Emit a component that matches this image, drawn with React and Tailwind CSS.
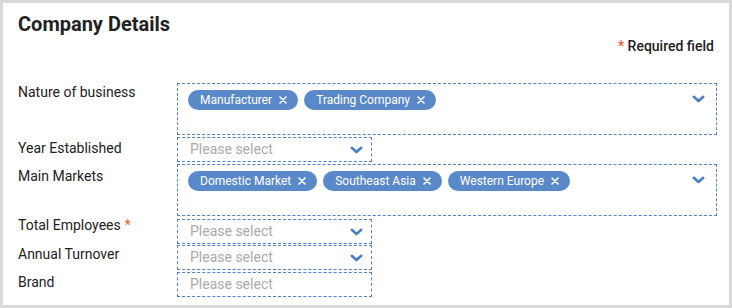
import React from "react";

const Chevron = () => (
  <svg width="13" height="8" viewBox="0 0 13 8" className="shrink-0">
    <path d="M1.8 1.8 L6.5 6 L11.2 1.8" fill="none" stroke="#4a7ec6" strokeWidth="2.6" strokeLinecap="round" strokeLinejoin="round" />
  </svg>
);

const Cross = () => (
  <svg width="8" height="8" viewBox="0 0 8 8" className="shrink-0">
    <path d="M1 1 L7 7 M7 1 L1 7" stroke="#fff" strokeWidth="1.6" strokeLinecap="round" />
  </svg>
);

const Tag = ({ label }) => (
  <span className="flex h-[20px] items-center gap-[7px] rounded-full bg-[#5a89c9] pl-[12px] pr-[11px] text-[12px] text-white">
    {label}
    <Cross />
  </span>
);

const MultiSelect = ({ tags }) => (
  <div className="flex h-[52px] w-[540px] items-start justify-between border border-dashed border-[#4f82c9] pl-[10px] pr-[11px] pt-[6px]">
    <div className="flex gap-[6px]">
      {tags.map((t) => (
        <Tag key={t} label={t} />
      ))}
    </div>
    <div className="pt-[5px]">
      <Chevron />
    </div>
  </div>
);

const Select = ({ arrow = true }) => (
  <div className="flex h-[25px] w-[195px] items-center justify-between border border-dashed border-[#4f82c9] pl-[12px] pr-[8px] text-[14px] text-[#aaaaaa]">
    <span>Please select</span>
    {arrow && <Chevron />}
  </div>
);

const rows = [
  { label: "Nature of business", mt: "mt-0", lt: "mt-[1px]", field: <MultiSelect tags={["Manufacturer", "Trading Company"]} /> },
  { label: "Year Established", mt: "mt-[2px]", lt: "mt-[3px]", field: <Select /> },
  { label: "Main Markets", mt: "mt-[2px]", lt: "mt-[4px]", field: <MultiSelect tags={["Domestic Market", "Southeast Asia", "Western Europe"]} /> },
  { label: "Total Employees", req: true, mt: "mt-[3px]", lt: "-mt-[2px]", field: <Select /> },
  { label: "Annual Turnover", mt: "mt-[1px]", lt: "mt-[1px]", field: <Select /> },
  { label: "Brand", mt: "mt-[2px]", lt: "mt-[2px]", field: <Select arrow={false} /> },
];

export default function App() {
  return (
    <div className="h-[308px] w-[732px] bg-[#d9d9d9] p-[3px] font-['Roboto',sans-serif] text-[#222222]">
      <div className="flex h-full flex-col bg-white pl-[15px] pr-[12px]">
        <h1 className="pt-[9px] text-[20px] font-bold leading-[24px]">Company Details</h1>
        <div className="mt-[2px] pr-[3px] text-right text-[14px] font-medium leading-[16px]">
          <span className="text-[#f0592b]">*</span> Required field
        </div>
        <div className="mt-[29px] flex flex-col">
          {rows.map((r) => (
            <div key={r.label} className={`flex items-start ${r.mt}`}>
              <div className={`w-[159px] shrink-0 text-[14px] leading-[16px] ${r.lt}`}>
                {r.label}
                {r.req && <span className="ml-[4px] text-[#f0592b]">*</span>}
              </div>
              {r.field}
            </div>
          ))}
        </div>
      </div>
    </div>
  );
}
